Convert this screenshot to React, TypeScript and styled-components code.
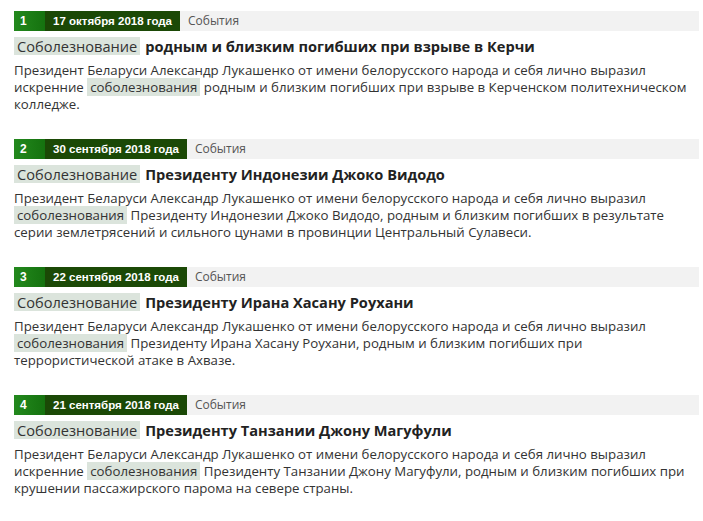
import styled, { createGlobalStyle } from "styled-components"

const GlobalStyle = createGlobalStyle`
   body {
      margin: 0;
      background: #ffffff;
      font-family: "Open Sans", "DejaVu Sans", sans-serif;
   }
`

const StyledPage = styled.div`
   padding: 11px 4px 0 14px;
`

const StyledItem = styled.div`
   margin-bottom: 26px;
`

const StyledBar = styled.div`
   display: flex;
   height: 20px;
   background: #f2f2f2;
   font-size: 12px;
   line-height: 20px;
`

const StyledNum = styled.div`
   width: 31px;
   padding-left: 6px;
   box-sizing: border-box;
   color: #ffffff;
   font-family: "Liberation Sans Narrow", "Liberation Sans", sans-serif;
   font-weight: bold;
   background: linear-gradient(to right, #23891d, #15720f);
`

const StyledDate = styled.div`
   padding: 0 8px;
   color: #ffffff;
   font-family: "Liberation Sans Narrow", "Liberation Sans", sans-serif;
   font-size: 11.5px;
   font-weight: bold;
   background: #1b4906;
`

const StyledCategory = styled.div`
   padding: 0 8px;
   color: #555555;
`

const StyledTitle = styled.h2`
   margin: 6px 0 7px;
   font-size: 14.6px;
   line-height: 18px;
   font-weight: bold;
   color: #222222;
`

const StyledHead = styled.span`
   display: inline-block;
   padding: 0 3px;
   margin-right: 5px;
   background: #dbe4dc;
   font-weight: normal;
   color: #333333;
`

const StyledMark = styled.span`
   padding: 0 3px;
   background: #dbe4dc;
`

const StyledText = styled.p`
   margin: 0;
   font-size: 13.25px;
   line-height: 17px;
   color: #333333;
`

type TNews = {
   date: string
   title: string
   before: string
   after: string
}

const news: TNews[] = [
   {
      date: "17 октября 2018 года",
      title: "родным и близким погибших при взрыве в Керчи",
      before: "Президент Беларуси Александр Лукашенко от имени белорусского народа и себя лично выразил искренние",
      after: "родным и близким погибших при взрыве в Керченском политехническом колледже.",
   },
   {
      date: "30 сентября 2018 года",
      title: "Президенту Индонезии Джоко Видодо",
      before: "Президент Беларуси Александр Лукашенко от имени белорусского народа и себя лично выразил",
      after: "Президенту Индонезии Джоко Видодо, родным и близким погибших в результате серии землетрясений и сильного цунами в провинции Центральный Сулавеси.",
   },
   {
      date: "22 сентября 2018 года",
      title: "Президенту Ирана Хасану Роухани",
      before: "Президент Беларуси Александр Лукашенко от имени белорусского народа и себя лично выразил",
      after: "Президенту Ирана Хасану Роухани, родным и близким погибших при террористической атаке в Ахвазе.",
   },
   {
      date: "21 сентября 2018 года",
      title: "Президенту Танзании Джону Магуфули",
      before: "Президент Беларуси Александр Лукашенко от имени белорусского народа и себя лично выразил искренние",
      after: "Президенту Танзании Джону Магуфули, родным и близким погибших при крушении пассажирского парома на севере страны.",
   },
]

const App: React.FC = () => {
   return (
      <StyledPage>
         <GlobalStyle />
         {news.map((n, i) => (
            <StyledItem key={i}>
               <StyledBar>
                  <StyledNum>{i + 1}</StyledNum>
                  <StyledDate>{n.date}</StyledDate>
                  <StyledCategory>События</StyledCategory>
               </StyledBar>
               <StyledTitle>
                  <StyledHead>Соболезнование</StyledHead>
                  {n.title}
               </StyledTitle>
               <StyledText>
                  {n.before} <StyledMark>соболезнования</StyledMark> {n.after}
               </StyledText>
            </StyledItem>
         ))}
      </StyledPage>
   )
}

export default App
